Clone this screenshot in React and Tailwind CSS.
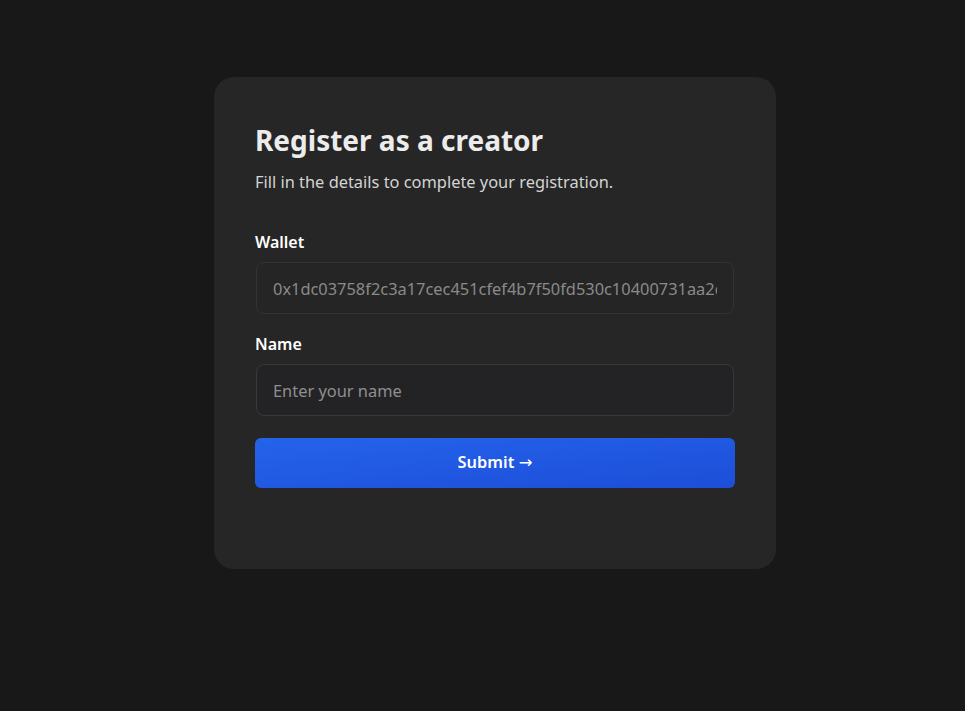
import { useState } from 'react'

const wallet = '0x1dc03758f2c3a17cec451cfef4b7f50fd530c10400731aa2d4'

export default function App() {
  const [name, setName] = useState('')

  return (
    <div className="min-h-screen bg-[#181818] pt-[77px] font-['Noto_Sans','Open_Sans',sans-serif]">
      <div className="ml-[214px] w-[562px] rounded-[20px] bg-[#262626] px-[41px] pt-[43px] pb-[81px]">
        <h1 className="text-[28px] leading-[40px] font-bold text-[#ececec]">Register as a creator</h1>
        <p className="mt-[10px] text-[16.4px] leading-[24px] text-[#d4d4d4]">Fill in the details to complete your registration.</p>

        <form onSubmit={(e) => e.preventDefault()} className="mt-[36px]">
          <label className="block">
            <span className="block text-[16px] leading-[24px] font-semibold text-white">Wallet</span>
            <input
              value={wallet}
              readOnly
              className="mx-px mt-[8px] block h-[52px] w-[478px] rounded-[8px] border border-[#333333] bg-[#252525] px-[16px] text-[16.4px] text-[#8a8a8a] outline-none"
            />
          </label>

          <label className="mt-[18px] block">
            <span className="block text-[16px] leading-[24px] font-semibold text-white">Name</span>
            <input
              value={name}
              onChange={(e) => setName(e.target.value)}
              placeholder="Enter your name"
              className="mx-px mt-[8px] block h-[52px] w-[478px] rounded-[8px] border border-[#383838] bg-[#232325] px-[16px] text-[16.4px] text-white placeholder:text-[#8f8f8f] outline-none"
            />
          </label>

          <button className="mt-[22px] h-[50px] w-full rounded-[6px] bg-gradient-to-br from-[#2563eb] to-[#1d4ed8] text-[16.4px] font-semibold text-white">
            Submit <span className="font-['DejaVu_Sans',sans-serif] font-normal">→</span>
          </button>
        </form>
      </div>
    </div>
  )
}
